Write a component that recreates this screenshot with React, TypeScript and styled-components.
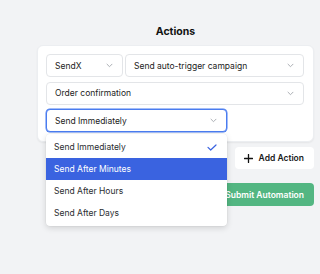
import * as React from "react";
import styled, { createGlobalStyle } from "styled-components";
import { useState } from "react";

const GlobalStyle = createGlobalStyle`
  html, body {
    margin: 0;
    padding: 0;
    background: #f2f3f5;
    font-family: Inter, "Noto Sans", sans-serif;
    color: #1f2328;
  }
`;

const Page = styled.div`
  width: 320px;
  height: 274px;
  padding: 25px 6px 0 37px;
  box-sizing: border-box;
  display: flex;
  flex-direction: column;
`;

const Title = styled.h2`
  margin: 0 0 6px;
  text-align: center;
  font-size: 10.5px;
  font-weight: 700;
  line-height: 14px;
  color: #111;
`;

const Card = styled.div`
  background: #fff;
  border-radius: 6px;
  border: 1px solid #eceef1;
  box-shadow: 0 1px 2px rgba(0, 0, 0, 0.06);
  padding: 8px 9px 9px 8px;
  display: flex;
  flex-direction: column;
  gap: 4.5px;
`;

const Row = styled.div`
  display: flex;
  gap: 2px;
`;

const SelectWrap = styled.div<{ $width?: number }>`
  position: relative;
  flex: ${(p) => (p.$width ? `0 0 ${p.$width}px` : "1 1 auto")};
`;

const SelectBox = styled.div<{ $focused?: boolean }>`
  height: 23px;
  box-sizing: border-box;
  border: 1px solid ${(p) => (p.$focused ? "#4a7cf0" : "#e3e5e8")};
  border-radius: 4px;
  background: #fff;
  display: flex;
  align-items: center;
  justify-content: space-between;
  padding: 0 9px 0 8px;
  font-size: 8.5px;
  color: #222;
  box-shadow: ${(p) => (p.$focused ? "0 0 0 0.5px #4a7cf0" : "none")};
`;

const Chevron = () => (
  <svg width="7" height="5" viewBox="0 0 7 5" fill="none">
    <path d="M1 1.2L3.5 3.7L6 1.2" stroke="#a3a7ad" strokeWidth="0.9" strokeLinecap="round" strokeLinejoin="round" />
  </svg>
);

const Menu = styled.div`
  position: absolute;
  top: calc(100% + 2px);
  left: 0;
  right: 0;
  background: #fff;
  border-radius: 4px;
  box-shadow: 0 2px 6px rgba(0, 0, 0, 0.14), 0 0 0 0.5px rgba(0, 0, 0, 0.05);
  padding: 2px 0;
  z-index: 10;
`;

const Item = styled.div<{ $active?: boolean }>`
  height: 22px;
  display: flex;
  align-items: center;
  justify-content: space-between;
  padding: 0 10px 0 8px;
  font-size: 8.5px;
  background: ${(p) => (p.$active ? "#3a63e0" : "transparent")};
  color: ${(p) => (p.$active ? "#fff" : "#2a2d31")};
`;

const Check = () => (
  <svg width="10" height="7" viewBox="0 0 10 7" fill="none">
    <path d="M1 3.4L3.7 6L9 1" stroke="#3a63e0" strokeWidth="1.2" strokeLinecap="round" strokeLinejoin="round" />
  </svg>
);

const Actions = styled.div`
  display: flex;
  flex-direction: column;
  align-items: flex-end;
  margin-top: 5px;
  gap: 14px;
`;

const AddButton = styled.button`
  height: 22px;
  border: none;
  border-radius: 4px;
  background: #fff;
  display: flex;
  align-items: center;
  gap: 6px;
  padding: 0 10px 0 9px;
  font-family: inherit;
  font-size: 8.5px;
  font-weight: 600;
  color: #1a1a1a;
  cursor: pointer;
`;

const SubmitButton = styled.button`
  height: 23px;
  border: none;
  border-radius: 4px;
  background: #53b682;
  color: #fff;
  font-family: inherit;
  font-size: 8.5px;
  font-weight: 600;
  padding: 0 10px;
  cursor: pointer;
`;

const Plus = () => (
  <svg width="9" height="9" viewBox="0 0 9 9" fill="none">
    <path d="M4.5 0.5V8.5M0.5 4.5H8.5" stroke="#111" strokeWidth="1.3" strokeLinecap="round" />
  </svg>
);

const timings = ["Send Immediately", "Send After Minutes", "Send After Hours", "Send After Days"];

const App: React.FC = () => {
  const [selected] = useState<string>("Send Immediately");
  const [hovered] = useState<string>("Send After Minutes");

  return (
    <>
      <GlobalStyle />
      <Page>
        <Title>Actions</Title>
        <Card>
          <Row>
            <SelectWrap $width={77}>
              <SelectBox>
                SendX
                <Chevron />
              </SelectBox>
            </SelectWrap>
            <SelectWrap>
              <SelectBox>
                Send auto-trigger campaign
                <Chevron />
              </SelectBox>
            </SelectWrap>
          </Row>
          <Row>
            <SelectWrap>
              <SelectBox>
                Order confirmation
                <Chevron />
              </SelectBox>
            </SelectWrap>
          </Row>
          <Row>
            <SelectWrap $width={181}>
              <SelectBox $focused>
                {selected}
                <Chevron />
              </SelectBox>
              <Menu>
                {timings.map((t) => (
                  <Item key={t} $active={t === hovered}>
                    {t}
                    {t === selected ? <Check /> : null}
                  </Item>
                ))}
              </Menu>
            </SelectWrap>
          </Row>
        </Card>
        <Actions>
          <AddButton>
            <Plus />
            Add Action
          </AddButton>
          <SubmitButton>Submit Automation</SubmitButton>
        </Actions>
      </Page>
    </>
  );
};

export default App;
